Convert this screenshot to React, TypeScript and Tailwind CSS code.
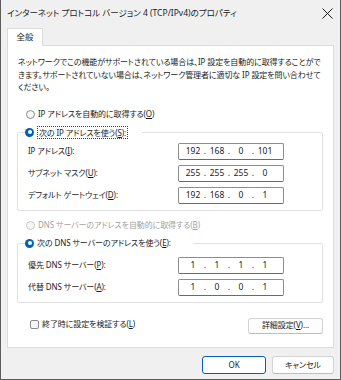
import type { ReactNode } from 'react';

const Key = ({ k }: { k: string }) => <span className="underline underline-offset-[1px]">{k}</span>;

function Radio({ checked, disabled }: { checked?: boolean; disabled?: boolean }) {
  if (checked) {
    return (
      <span className="w-[9px] h-[9px] rounded-full bg-[#005fb8] flex items-center justify-center shrink-0">
        <span className="w-[4px] h-[4px] rounded-full bg-white" />
      </span>
    );
  }
  return (
    <span
      className={`w-[9px] h-[9px] rounded-full border shrink-0 bg-[#f7f7f7] ${
        disabled ? 'border-[#c6c6c6]' : 'border-[#8a8a8a]'
      }`}
    />
  );
}

function IpField({ octets }: { octets: string[] }) {
  return (
    <div className="w-[106px] h-[17px] bg-white border border-[#8d8d8d] border-b-[#6a6a6a] rounded-[2px] flex items-center pl-[4px] text-[8.5px] tracking-normal">
      {octets.map((o, i) => (
        <div key={i} className="flex items-center">
          <span className="w-[20px] text-center">{o}</span>
          {i < 3 && <span className="w-[4px] text-center">.</span>}
        </div>
      ))}
    </div>
  );
}

function Row({ label, octets }: { label: ReactNode; octets: string[] }) {
  return (
    <div className="flex items-center">
      <span className="w-[150px] whitespace-nowrap">{label}</span>
      <IpField octets={octets} />
    </div>
  );
}

export default function App() {
  return (
    <div className="w-[341px] h-[380px] bg-[#f0f0f0] border-x border-b border-[#5c5c5c] flex flex-col font-['Noto_Sans','Noto_Sans_CJK_JP',sans-serif] text-[8px] leading-[12.5px] tracking-[-0.1px] text-[#1b1b1b] [font-feature-settings:'palt'] overflow-hidden">
      {/* title bar */}
      <div className="h-[26px] shrink-0 flex items-center justify-between pl-[6px] pr-[6px] text-[8.5px] tracking-normal">
        <span className="whitespace-nowrap">インターネット プロトコル バージョン 4 (TCP/IPv4)のプロパティ</span>
        <svg width="11" height="11" viewBox="0 0 11 11" className="mr-[1px]">
          <path d="M0.5 0.5 L10.5 10.5 M10.5 0.5 L0.5 10.5" stroke="#1b1b1b" strokeWidth="1" />
        </svg>
      </div>

      <div className="px-[6px]">
        <div className="flex mt-[2px]">
          <div className="relative z-10 h-[18px] w-[36px] bg-white border border-b-0 border-[#dadada] flex items-center justify-center pb-[1px] text-[8.5px]">
            全般
          </div>
        </div>

        <div className="h-[303px] -mt-px bg-white border border-[#dcdcdc] pt-[10px] px-[10px]">
          <p className="whitespace-nowrap">
            ネットワークでこの機能がサポートされている場合は、IP 設定を自動的に取得することがで
            <br />
            きます。サポートされていない場合は、ネットワーク管理者に適切な IP 設定を問い合わせて
            <br />
            ください。
          </p>

          <label className="mt-[14px] ml-[8px] h-[13px] flex items-center gap-[3px]">
            <Radio />
            <span>IP アドレスを自動的に取得する(<Key k="O" />)</span>
          </label>

          <fieldset className="-ml-px mt-[5px] border border-[#e1e1e1] rounded-[2px] pl-[10px] pb-[6px]">
            <legend className="-ml-[3px] pr-[14px] h-[13px] flex items-center gap-[3px]">
              <Radio checked />
              <span className="border border-dotted border-[#3c3c3c] px-px leading-[11px]">
                次の IP アドレスを使う(<Key k="S" />):
              </span>
            </legend>
            <div className="flex flex-col gap-[5px] mt-[4px]">
              <Row label={<>IP アドレス(<Key k="I" />):</>} octets={['192', '168', '0', '101']} />
              <Row label={<>サブネット マスク(<Key k="U" />):</>} octets={['255', '255', '255', '0']} />
              <Row label={<>デフォルト ゲートウェイ(<Key k="D" />):</>} octets={['192', '168', '0', '1']} />
            </div>
          </fieldset>

          <label className="mt-[8px] ml-[8px] h-[13px] flex items-center gap-[3px] text-[#a3a3a3]">
            <Radio disabled />
            <span>DNS サーバーのアドレスを自動的に取得する(<Key k="B" />)</span>
          </label>

          <fieldset className="-ml-px mt-[5px] border border-[#e1e1e1] rounded-[2px] pl-[10px] pb-[6px]">
            <legend className="-ml-[3px] pr-[22px] h-[13px] flex items-center gap-[3px]">
              <Radio checked />
              <span>次の DNS サーバーのアドレスを使う(<Key k="E" />):</span>
            </legend>
            <div className="flex flex-col gap-[5px] mt-[7px]">
              <Row label={<>優先 DNS サーバー(<Key k="P" />):</>} octets={['1', '1', '1', '1']} />
              <Row label={<>代替 DNS サーバー(<Key k="A" />):</>} octets={['1', '0', '0', '1']} />
            </div>
          </fieldset>

          <div className="mt-[15px] flex items-center justify-between">
            <label className="ml-[12px] -mt-[3px] flex items-center gap-[3px]">
              <span className="w-[9px] h-[9px] rounded-[2px] border border-[#8a8a8a] bg-[#f7f7f7]" />
              <span>終了時に設定を検証する(<Key k="L" />)</span>
            </label>
            <button className="w-[75px] h-[16px] bg-[#fdfdfd] border border-[#d3d3d3] border-b-[#bdbdbd] rounded-[3px] flex items-center justify-center">
              詳細設定(<Key k="V" />)...
            </button>
          </div>
        </div>

        <div className="mt-[8px] flex justify-end gap-[6px]">
          <button className="w-[64px] h-[18px] bg-white border-[1.5px] border-[#005fb8] rounded-[3px] flex items-center justify-center">
            OK
          </button>
          <button className="w-[62px] h-[18px] bg-[#fdfdfd] border border-[#d3d3d3] border-b-[#bdbdbd] rounded-[3px] flex items-center justify-center">
            キャンセル
          </button>
        </div>
      </div>
    </div>
  );
}
